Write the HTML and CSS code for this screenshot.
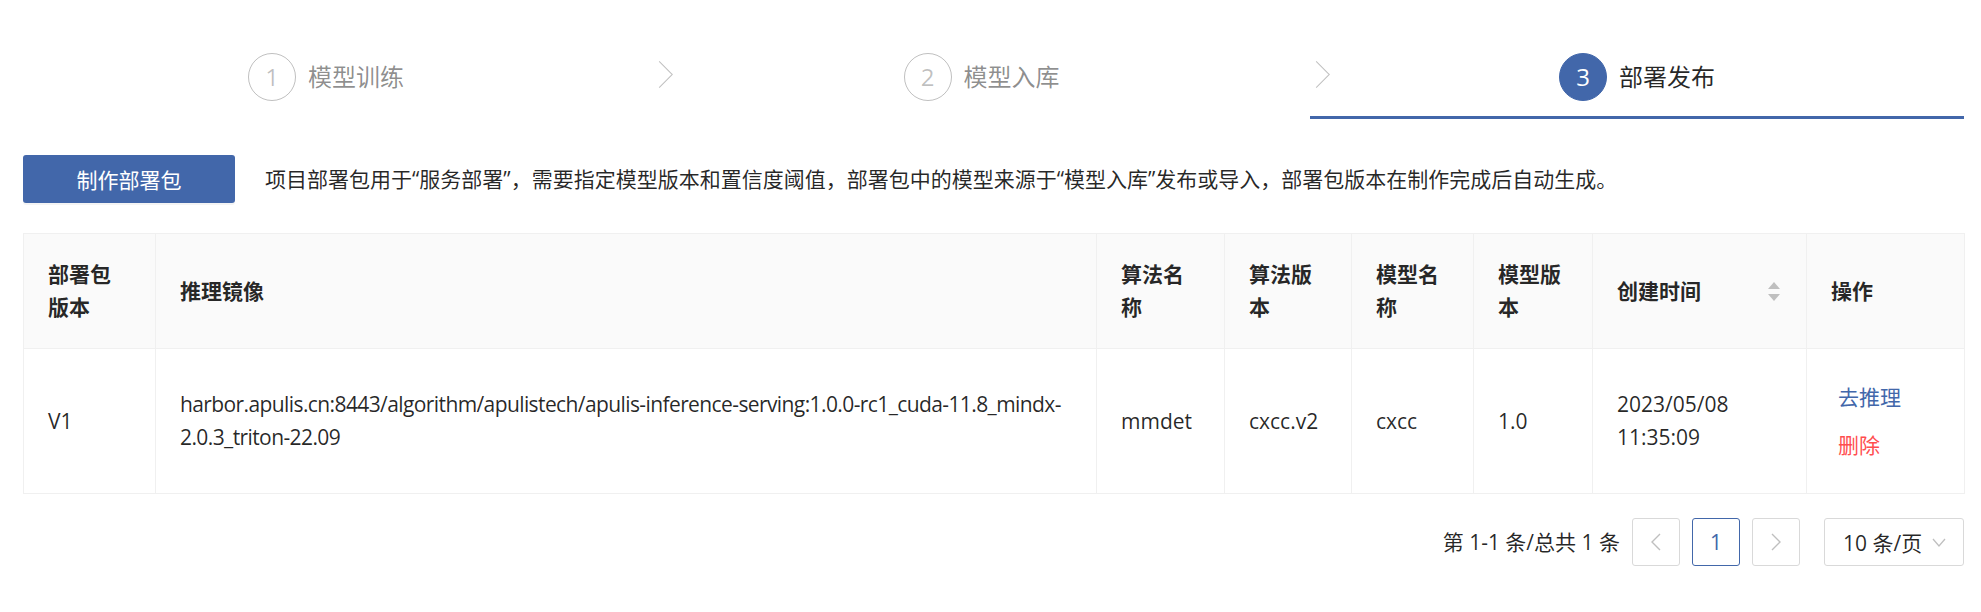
FILE: index.html
```html
<!DOCTYPE html>
<html lang="zh-CN">
<head>
<meta charset="utf-8">
<link rel="stylesheet" href="styles.css">
</head>
<body>
<div class="steps">
  <div class="step step-first">
    <div class="step-inner"><span class="step-icon">1</span><span class="step-title">模型训练</span></div>
  </div>
  <div class="step step-second">
    <div class="step-inner"><span class="step-icon">2</span><span class="step-title">模型入库</span></div>
  </div>
  <div class="step step-last step-active">
    <div class="step-inner"><span class="step-icon">3</span><span class="step-title">部署发布</span></div>
  </div>
</div>

<div class="toolbar">
  <button class="btn-primary">制作部署包</button>
  <p class="desc">项目部署包用于“服务部署”，需要指定模型版本和置信度阈值，部署包中的模型来源于“模型入库”发布或导入，部署包版本在制作完成后自动生成。</p>
</div>

<table class="table">
  <colgroup>
    <col class="c1"><col class="c2"><col class="c3"><col class="c4"><col class="c5"><col class="c6"><col class="c7"><col class="c8">
  </colgroup>
  <thead>
    <tr>
      <th>部署包<br>版本</th>
      <th>推理镜像</th>
      <th>算法名<br>称</th>
      <th>算法版<br>本</th>
      <th>模型名<br>称</th>
      <th>模型版<br>本</th>
      <th><div class="sort-head"><span>创建时间</span><span class="sorter"><span class="caret-up"></span><span class="caret-down"></span></span></div></th>
      <th>操作</th>
    </tr>
  </thead>
  <tbody>
    <tr>
      <td>V1</td>
      <td class="image-cell">harbor.apulis.cn:8443/algorithm/apulistech/apulis-inference-serving:1.0.0-rc1_cuda-11.8_mindx-<wbr>2.0.3_triton-22.09</td>
      <td>mmdet</td>
      <td>cxcc.v2</td>
      <td>cxcc</td>
      <td>1.0</td>
      <td>2023/05/08<br>11:35:09</td>
      <td class="ops"><a class="link">去推理</a><a class="link link-danger">删除</a></td>
    </tr>
  </tbody>
</table>

<div class="pagination">
  <span class="total">第 1-1 条/总共 1 条</span>
  <span class="page-btn disabled"><svg width="12" height="18" viewBox="0 0 12 18"><path d="M10 1 L2 9 L10 17" fill="none" stroke="currentColor" stroke-width="1.4"/></svg></span>
  <span class="page-btn active">1</span>
  <span class="page-btn disabled"><svg width="12" height="18" viewBox="0 0 12 18"><path d="M2 1 L10 9 L2 17" fill="none" stroke="currentColor" stroke-width="1.4"/></svg></span>
  <span class="size-select"><span>10 条/页</span><svg width="14" height="9" viewBox="0 0 14 9"><path d="M1 1 L7 8 L13 1" fill="none" stroke="currentColor" stroke-width="1.3"/></svg></span>
</div>
</body>
</html>
```
FILE: styles.css
```css
* { box-sizing: border-box; }
html, body { background: #fff; }
body {
  margin: 0;
  padding: 0 17px 0 23px;
  font-family: "Open Sans", "Noto Sans CJK SC", sans-serif;
  font-size: 21px;
  color: rgba(0,0,0,.85);
}

/* steps */
.steps {
  display: flex;
  margin-top: 53px;
}
.step {
  position: relative;
  display: flex;
  justify-content: center;
  padding-bottom: 18px;
}
.step-first { flex: 0 0 630px; }
.step-second { flex: 0 0 657px; padding-left: 24px; }
.step-last { flex: 1 1 auto; padding-left: 24px; }
.step-first::after, .step-second::after {
  content: "";
  position: absolute;
  top: 50%;
  left: 100%;
  width: 18px;
  height: 18px;
  margin-top: -21px;
  margin-left: -3px;
  border-top: 1px solid rgba(0,0,0,.25);
  border-right: 1px solid rgba(0,0,0,.25);
  transform: rotate(45deg);
}
.step-inner {
  display: flex;
  align-items: center;
  margin-left: -24px;
}
.step-icon {
  width: 48px;
  height: 48px;
  border: 1px solid rgba(0,0,0,.25);
  border-radius: 50%;
  color: rgba(0,0,0,.25);
  font-size: 24px;
  line-height: 46px;
  text-align: center;
  margin-right: 12px;
  font-family: "Open Sans", sans-serif;
}
.step-title {
  font-size: 24px;
  line-height: 48px;
  color: rgba(0,0,0,.45);
}
.step-active::before {
  content: "";
  position: absolute;
  left: 0;
  bottom: 0;
  width: 100%;
  height: 3px;
  background: #4267aa;
}
.step-active .step-icon {
  background: #4267aa;
  border-color: #4267aa;
  color: #fff;
}
.step-active .step-title { color: rgba(0,0,0,.85); }

/* toolbar */
.toolbar {
  display: flex;
  align-items: center;
  margin-top: 36px;
}
.btn-primary {
  width: 212px;
  height: 48px;
  border: 0;
  border-radius: 3px;
  background: #4267aa;
  color: #fff;
  font-family: inherit;
  font-size: 21px;
  box-shadow: 0 2px 0 rgba(0,0,0,.045);
}
.desc {
  margin: 0 0 0 30px;
  line-height: 33px;
}

/* table */
.table {
  width: 100%;
  margin-top: 30px;
  table-layout: fixed;
  border-collapse: collapse;
  border-top: 1px solid #f0f0f0;
  border-left: 1px solid #f0f0f0;
}
.c1 { width: 132px; }
.c2 { width: 941px; }
.c3 { width: 128px; }
.c4 { width: 127px; }
.c5 { width: 122px; }
.c6 { width: 119px; }
.c7 { width: 214px; }
.c8 { width: 158px; }
.table th, .table td {
  padding: 24px;
  line-height: 33px;
  text-align: left;
  vertical-align: middle;
  border-right: 1px solid #f0f0f0;
  border-bottom: 1px solid #f0f0f0;
}
.table th {
  background: #fafafa;
  font-weight: 700;
  color: rgba(0,0,0,.85);
}
.table td { background: #fff; }
.table td.image-cell { letter-spacing: -0.6px; }
.sort-head {
  display: flex;
  align-items: center;
  justify-content: space-between;
}
.sorter {
  display: flex;
  flex-direction: column;
  gap: 5px;
  margin-right: 2px;
}
.caret-up, .caret-down {
  width: 0;
  height: 0;
  border-left: 6px solid transparent;
  border-right: 6px solid transparent;
}
.caret-up { border-bottom: 7px solid #bfbfbf; }
.caret-down { border-top: 7px solid #bfbfbf; }
.link {
  display: block;
  height: 48px;
  line-height: 48px;
  padding-left: 7px;
  color: #4267aa;
  cursor: pointer;
}
.link-danger { color: #ff4d4f; }

/* pagination */
.pagination {
  display: flex;
  justify-content: flex-end;
  align-items: center;
  margin-top: 24px;
}
.total { margin-right: 12px; line-height: 48px; }
.page-btn {
  display: flex;
  align-items: center;
  justify-content: center;
  width: 48px;
  height: 48px;
  margin-right: 12px;
  border: 1px solid #d9d9d9;
  border-radius: 3px;
  color: rgba(0,0,0,.85);
  font-family: "Open Sans", sans-serif;
}
.page-btn.disabled { color: rgba(0,0,0,.25); }
.page-btn.active { border-color: #4267aa; color: #4267aa; }
.size-select {
  display: flex;
  align-items: center;
  justify-content: space-between;
  width: 140px;
  height: 48px;
  margin-left: 12px;
  padding: 0 17px 0 18px;
  border: 1px solid #d9d9d9;
  border-radius: 3px;
}
.size-select svg { color: rgba(0,0,0,.25); }
```
